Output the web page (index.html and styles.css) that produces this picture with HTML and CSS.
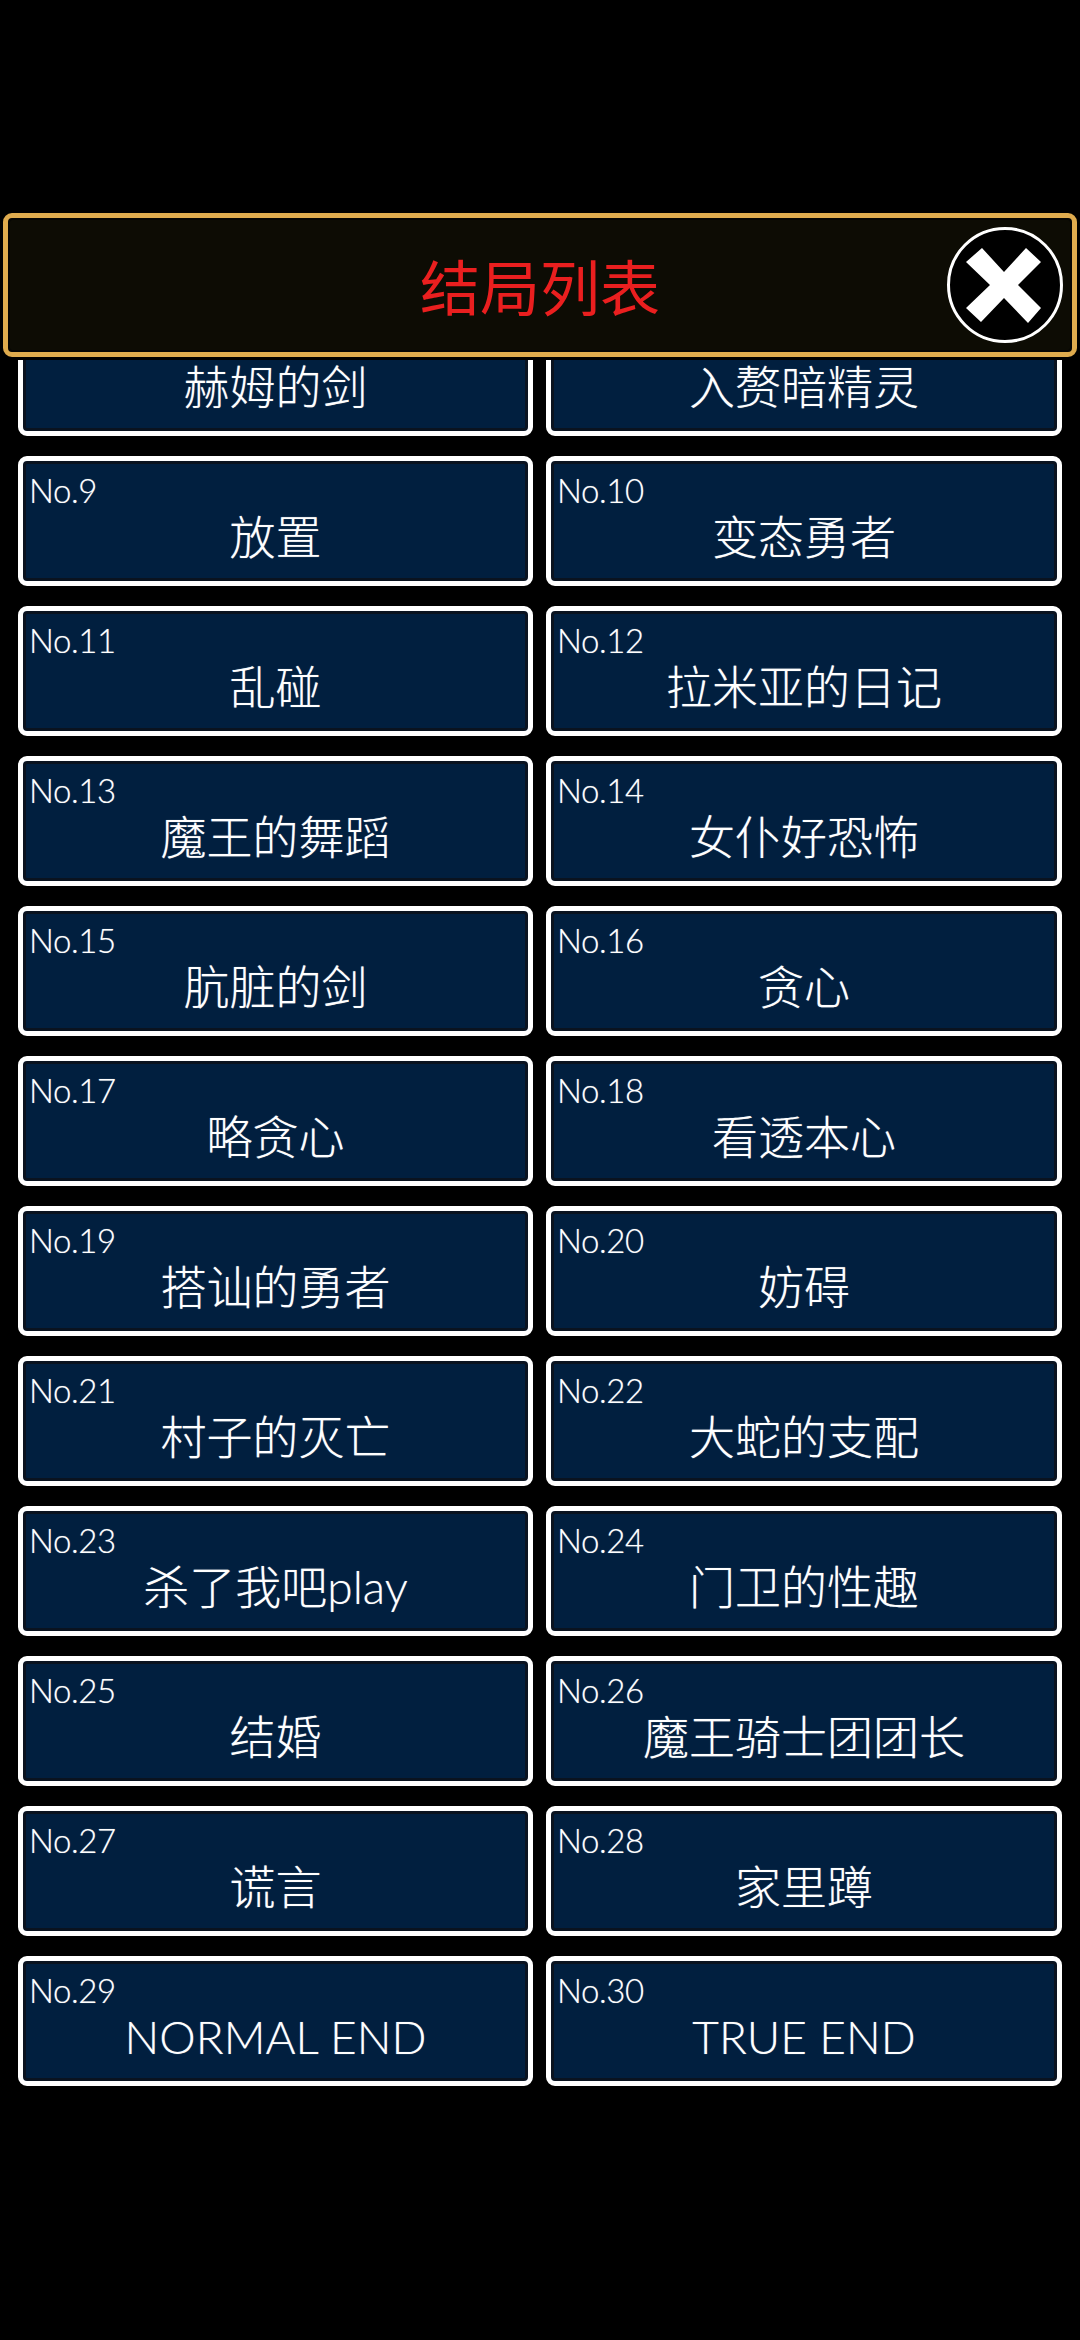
FILE: index.html
```html
<!DOCTYPE html>
<html lang="zh-CN">
<head>
<meta charset="utf-8">
<title>结局列表</title>
<link rel="stylesheet" href="styles.css">
</head>
<body>
<main class="screen">
  <header class="bar">
    <h1 class="bar-title">结局列表</h1>
    <button class="close" aria-label="关闭">
      <svg viewBox="0 0 116 116" width="116" height="116">
        <circle cx="58" cy="58" r="56.5" fill="#000" stroke="#fff" stroke-width="3"/>
        <path d="M35 21 L57 45 L79 21 L94 35 L71 58 L94 81 L81 96 L57 71 L34 95 L19 81 L43 58 L19 35 Z" fill="#fff"/>
      </svg>
    </button>
  </header>
  <section class="viewport">
    <div class="grid">
      <div class="card"><span class="no">No.7</span><span class="name">赫姆的剑</span></div>
      <div class="card"><span class="no">No.8</span><span class="name">入赘暗精灵</span></div>
      <div class="card"><span class="no">No.9</span><span class="name">放置</span></div>
      <div class="card"><span class="no">No.10</span><span class="name">变态勇者</span></div>
      <div class="card"><span class="no">No.11</span><span class="name">乱碰</span></div>
      <div class="card"><span class="no">No.12</span><span class="name">拉米亚的日记</span></div>
      <div class="card"><span class="no">No.13</span><span class="name">魔王的舞蹈</span></div>
      <div class="card"><span class="no">No.14</span><span class="name">女仆好恐怖</span></div>
      <div class="card"><span class="no">No.15</span><span class="name">肮脏的剑</span></div>
      <div class="card"><span class="no">No.16</span><span class="name">贪心</span></div>
      <div class="card"><span class="no">No.17</span><span class="name">略贪心</span></div>
      <div class="card"><span class="no">No.18</span><span class="name">看透本心</span></div>
      <div class="card"><span class="no">No.19</span><span class="name">搭讪的勇者</span></div>
      <div class="card"><span class="no">No.20</span><span class="name">妨碍</span></div>
      <div class="card"><span class="no">No.21</span><span class="name">村子的灭亡</span></div>
      <div class="card"><span class="no">No.22</span><span class="name">大蛇的支配</span></div>
      <div class="card"><span class="no">No.23</span><span class="name">杀了我吧play</span></div>
      <div class="card"><span class="no">No.24</span><span class="name">门卫的性趣</span></div>
      <div class="card"><span class="no">No.25</span><span class="name">结婚</span></div>
      <div class="card"><span class="no">No.26</span><span class="name">魔王骑士团团长</span></div>
      <div class="card"><span class="no">No.27</span><span class="name">谎言</span></div>
      <div class="card"><span class="no">No.28</span><span class="name">家里蹲</span></div>
      <div class="card"><span class="no">No.29</span><span class="name">NORMAL END</span></div>
      <div class="card"><span class="no">No.30</span><span class="name">TRUE END</span></div>
    </div>
  </section>
</main>
</body>
</html>
```
FILE: styles.css
```css
* { box-sizing: border-box; }
html, body { margin: 0; background: #000; }
body {
  width: 1080px;
  height: 2340px;
  overflow: hidden;
  font-family: "Lato", "Noto Sans CJK SC", sans-serif;
  font-weight: 300;
  color: #fff;
}
.screen {
  height: 2340px;
  padding: 213px 3px 0;
  display: flex;
  flex-direction: column;
}
.bar {
  height: 144px;
  flex: none;
  border: 5px solid #dfab4e;
  border-radius: 9px;
  background: #0d0c04;
  box-shadow: inset 0 0 0 2px #050503;
  display: flex;
  align-items: center;
  justify-content: center;
  position: relative;
}
.bar-title {
  margin: 0;
  font-size: 60px;
  font-weight: 400;
  line-height: 1;
  color: #ea1f1f;
  font-family: "Noto Sans CJK SC", sans-serif;
}
.close {
  position: absolute;
  right: 9px;
  top: 9px;
  width: 116px;
  height: 116px;
  padding: 0;
  border: 0;
  background: none;
  display: block;
}
.close svg { display: block; }
.viewport {
  flex: 1;
  margin: 3px 14px 0 15px;
  overflow: hidden;
}
.grid {
  margin-top: -54px;
  display: grid;
  grid-template-columns: 515px 516px;
  grid-auto-rows: 130px;
  column-gap: 13px;
  row-gap: 20px;
}
.card {
  border: 5px solid #fff;
  border-radius: 9px;
  background: #011f3f;
  box-shadow: inset 0 0 0 3px #0a1320;
  padding: 10px 6px 0;
  display: flex;
  flex-direction: column;
  text-shadow: 0 0 1px rgba(255, 255, 255, .55);
}
.no {
  font-size: 33px;
  line-height: 38px;
  letter-spacing: -.4px;
}
.name {
  font-size: 46px;
  line-height: 54px;
  text-align: center;
  margin-top: 1px;
}
```
